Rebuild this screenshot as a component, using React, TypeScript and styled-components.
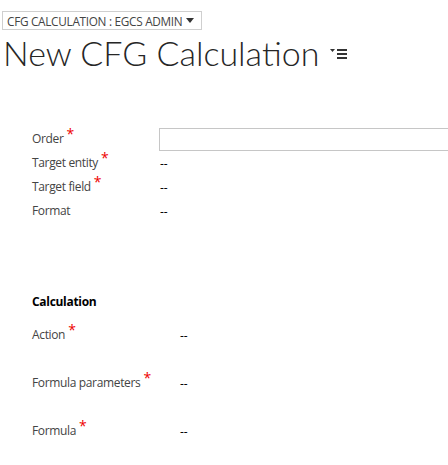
import React from "react";
import styled, { createGlobalStyle } from "styled-components";

const GlobalStyle = createGlobalStyle`
  html, body {
    margin: 0;
    padding: 0;
    background: #fff;
  }
  body {
    font-family: "Open Sans", "Noto Sans", sans-serif;
    width: 448px;
    height: 465px;
    overflow: hidden;
  }
`;

const Page = styled.div`
  display: flex;
  flex-direction: column;
  align-items: flex-start;
  padding: 11px 0 0 2px;
`;

const EntityPicker = styled.div`
  display: flex;
  align-items: center;
  gap: 4px;
  height: 17px;
  padding: 0 7px 0 4px;
  border: 1px solid #cfcfcf;
  font-size: 11.8px;
  color: #444;
  letter-spacing: -0.3px;
`;

const Caret = styled.span`
  width: 0;
  height: 0;
  border-left: 4px solid transparent;
  border-right: 4px solid transparent;
  border-top: 5px solid #333;
`;

const TitleRow = styled.div`
  display: flex;
  align-items: center;
  gap: 11px;
  margin: 1px 0 0 1px;
  height: 44px;
`;

const Title = styled.h1`
  margin: 0;
  font-family: "Lato", "Open Sans", sans-serif;
  font-size: 34px;
  font-weight: 300;
  color: #262626;
  line-height: 44px;
`;

const Section = styled.section<{ $gap: number }>`
  align-self: stretch;
  margin-top: ${(p) => p.$gap}px;
  padding: 0 0 0 30px;
`;

const Row = styled.div<{ $height: number }>`
  display: flex;
  align-items: center;
  height: ${(p) => p.$height}px;
`;

const Label = styled.div<{ $width: number }>`
  width: ${(p) => p.$width}px;
  flex-shrink: 0;
  font-size: 12px;
  line-height: 16px;
  color: #444;
  letter-spacing: -0.35px;
`;

const Required = styled.span`
  position: relative;
  top: -4px;
  color: #e00;
  font-size: 14px;
  line-height: 0;
  margin-left: 3px;
`;

const Value = styled.div`
  font-size: 12px;
  color: #000;
`;

const TextBox = styled.div`
  flex: 1;
  height: 21px;
  border: 1px solid #c6c6c6;
  border-right: none;
`;

const SectionTitle = styled.div`
  font-size: 12px;
  font-weight: 700;
  color: #000;
  letter-spacing: -0.3px;
`;

function MenuIcon() {
  return (
    <svg width="18" height="12" viewBox="0 0 18 12">
      <path d="M0 2h5l-2.5 3z" fill="#333" />
      <rect x="7" y="2" width="10" height="2" fill="#333" />
      <rect x="7" y="6" width="10" height="2" fill="#333" />
      <rect x="7" y="10" width="10" height="2" fill="#333" />
    </svg>
  );
}

type Field = { label: string; required?: boolean };

const general: Field[] = [
  { label: "Target entity", required: true },
  { label: "Target field", required: true },
  { label: "Format" },
];

const calculation: Field[] = [
  { label: "Action", required: true },
  { label: "Formula parameters", required: true },
  { label: "Formula", required: true },
];

export default function App() {
  return (
    <Page>
      <GlobalStyle />
      <EntityPicker>
        CFG CALCULATION : EGCS ADMIN
        <Caret />
      </EntityPicker>
      <TitleRow>
        <Title>New CFG Calculation</Title>
        <MenuIcon />
      </TitleRow>

      <Section $gap={52}>
        <Row $height={24}>
          <Label $width={127}>
            Order<Required>*</Required>
          </Label>
          <TextBox />
        </Row>
        {general.map((f) => (
          <Row $height={24} key={f.label}>
            <Label $width={128}>
              {f.label}
              {f.required && <Required>*</Required>}
            </Label>
            <Value>--</Value>
          </Row>
        ))}
      </Section>

      <Section $gap={66}>
        <Row $height={24}>
          <SectionTitle>Calculation</SectionTitle>
        </Row>
        {calculation.map((f, i) => (
          <Row $height={48} key={f.label} style={i === 0 ? { marginTop: -2 } : undefined}>
            <Label $width={148}>
              {f.label}
              {f.required && <Required>*</Required>}
            </Label>
            <Value>--</Value>
          </Row>
        ))}
      </Section>
    </Page>
  );
}
